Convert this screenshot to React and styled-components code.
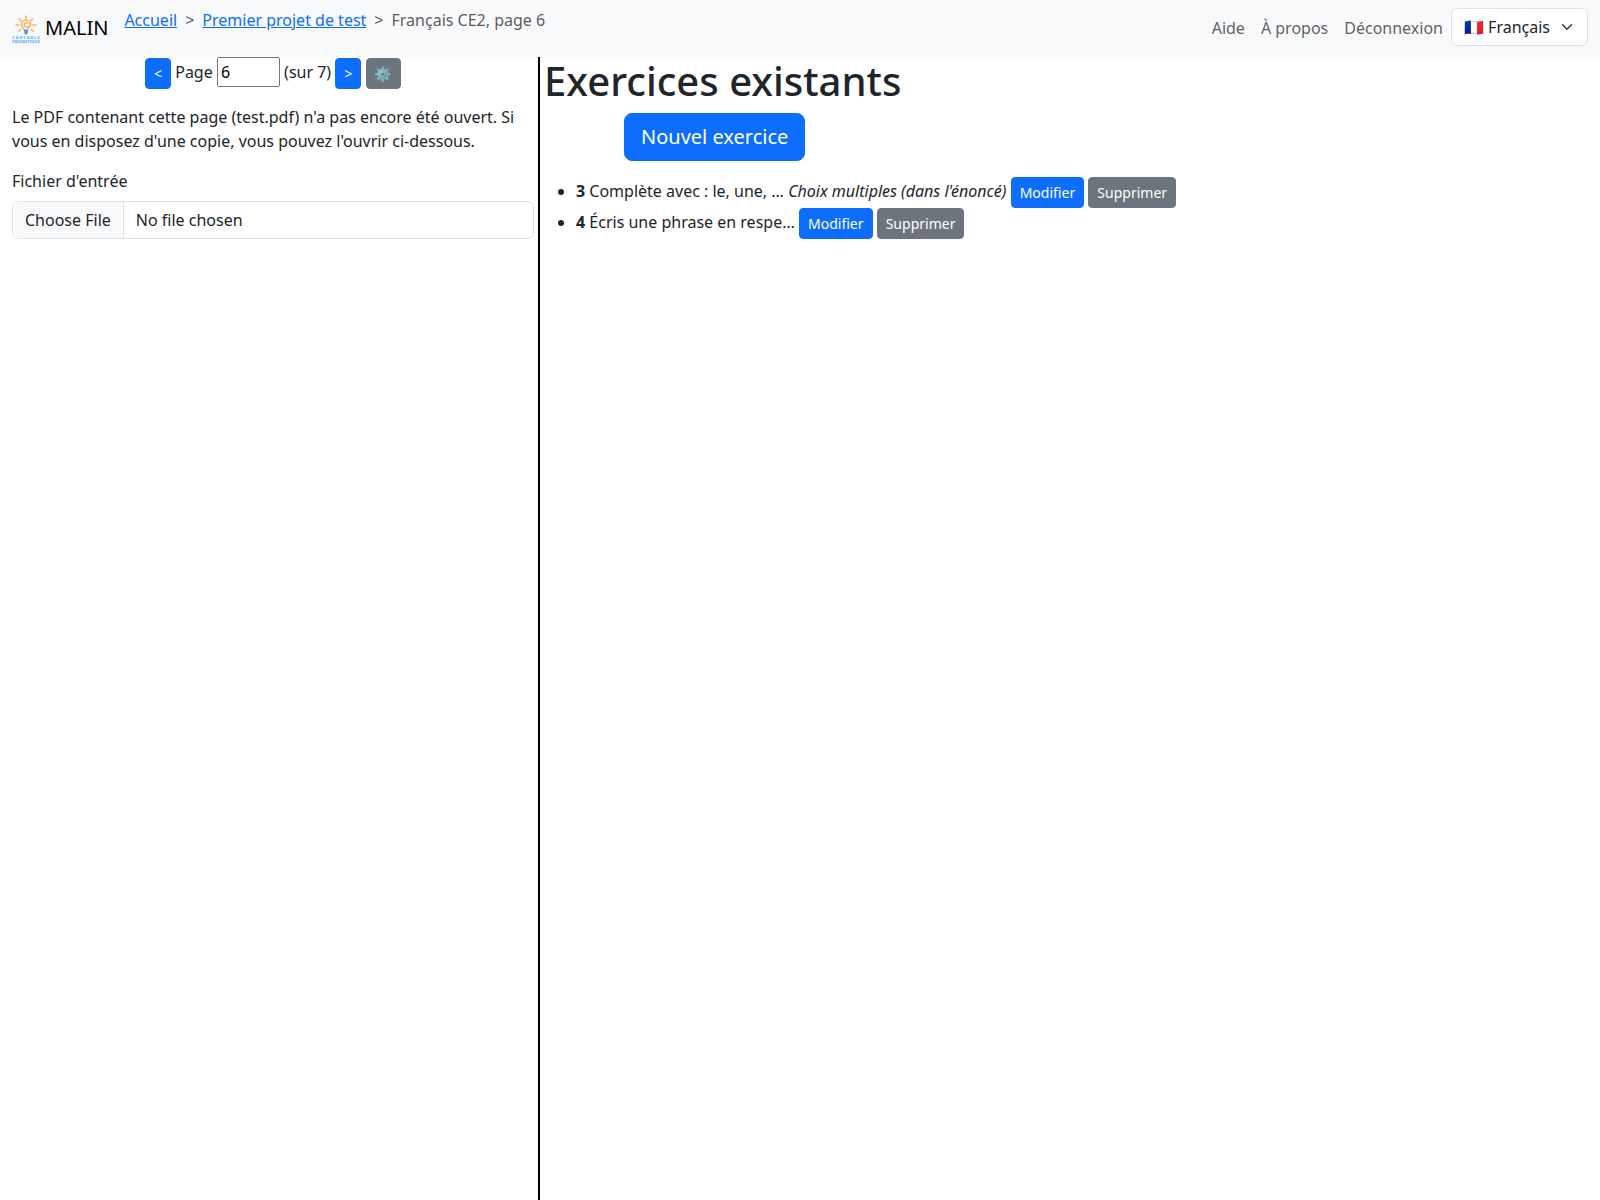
import React, { useState } from "react";
import styled, { createGlobalStyle, css } from "styled-components";

const GlobalStyle = createGlobalStyle`
  *, *::before, *::after { box-sizing: border-box; }
  body {
    margin: 0;
    background: #fff;
    color: #212529;
    font-family: "Noto Sans", "Liberation Sans", "Noto Color Emoji", sans-serif;
    font-size: 16px;
    line-height: 24px;
  }
  button, input, select { margin: 0; font-family: inherit; }
`;

const Page = styled.div`
  display: flex;
  flex-direction: column;
  min-height: 100vh;
`;

const Navbar = styled.header`
  display: flex;
  align-items: flex-start;
  padding: 8px 12px 9px;
  background: #f8f9fa;
`;

const Brand = styled.a`
  display: flex;
  align-items: center;
  gap: 5px;
  margin-right: 16px;
  padding: 5px 0;
  color: #000;
  font-size: 20px;
  line-height: 30px;
  text-decoration: none;
`;

const LogoDrawing = styled.svg`
  width: 28px;
  height: 30px;
  overflow: visible;
`;

const Breadcrumb = styled.ol`
  display: flex;
  flex: 1;
  margin: 0;
  padding: 0;
  list-style: none;
`;

const Crumb = styled.li`
  color: rgba(33, 37, 41, 0.75);

  & + &::before {
    content: ">";
    padding: 0 8px;
  }
`;

const CrumbLink = styled.a`
  color: #0d6efd;
  text-decoration: underline;
`;

const NavLinks = styled.nav`
  display: flex;
`;

const NavLink = styled.a`
  padding: 8px;
  color: rgba(0, 0, 0, 0.65);
  text-decoration: none;
`;

const LanguageField = styled.div`
  display: grid;
  align-items: center;

  & > * { grid-area: 1 / 1; }
`;

const LanguageSelect = styled.select`
  appearance: none;
  padding: 6px 37px 6px 12px;
  border: 1px solid #dee2e6;
  border-radius: 6px;
  background: #fff;
  color: #212529;
  font-size: 16px;
  line-height: 24px;
`;

const Chevron = styled.svg`
  justify-self: end;
  width: 16px;
  height: 12px;
  margin-right: 13px;
  pointer-events: none;
`;

const Columns = styled.main`
  display: flex;
  flex: 1;
`;

const SourcePanel = styled.section`
  flex: 0 0 33.75%;
  padding: 0 4px 0 12px;
  border-right: 2px solid #000;
`;

const ExercisesPanel = styled.section`
  flex: 1;
  padding-left: 4px;
`;

const Pager = styled.div`
  margin-bottom: 16px;
  text-align: center;
`;

const PageInput = styled.input`
  width: 63px;
  font-size: 16px;
  line-height: 24px;
`;

const Notice = styled.p`
  margin: 0 0 16px;
`;

const FileLabel = styled.label`
  display: block;
  margin-bottom: 8px;
`;

const FileInput = styled.input`
  display: block;
  width: 100%;
  padding: 6px 12px;
  overflow: hidden;
  border: 1px solid #dee2e6;
  border-radius: 6px;
  background: #fff;
  color: #212529;
  font-size: 16px;
  line-height: 24px;

  &::file-selector-button {
    margin: -6px 12px -6px -12px;
    padding: 6px 12px;
    border: 0 solid #dee2e6;
    border-right-width: 1px;
    border-radius: 0;
    background: #f8f9fa;
    color: #212529;
    font: inherit;
  }
`;

const Button = styled.button`
  padding: 4px 8px;
  border: 1px solid ${(p) => (p.$secondary ? "#6c757d" : "#0d6efd")};
  border-radius: 4px;
  background: ${(p) => (p.$secondary ? "#6c757d" : "#0d6efd")};
  color: #fff;
  font-size: 14px;
  line-height: 21px;
  vertical-align: middle;
  cursor: pointer;

  ${(p) =>
    p.$large &&
    css`
      display: block;
      margin-left: 80px;
      padding: 8px 16px;
      border-radius: 8px;
      font-size: 20px;
      line-height: 30px;
    `}
`;

const Title = styled.h1`
  margin: 0 0 8px;
  font-size: 40px;
  font-weight: 500;
  line-height: 48px;
`;

const ExerciseList = styled.ul`
  margin: 16px 0;
  padding-left: 32px;
`;

const exercises = [
  { number: "3", text: "Complète avec : le, une, …", kind: "Choix multiples (dans l'énoncé)" },
  { number: "4", text: "Écris une phrase en respe…" },
];

function Logo() {
  return (
    <LogoDrawing viewBox="0 -1.5 28 30" aria-hidden="true">
      <g fill="none" stroke="#fbb25c" strokeWidth="1.5" strokeLinecap="round">
        <path d="M14 1.500v3M7 4l2 2.200M21 4l-2 2.200M4 10.500h3.500M20.500 10.500H24M6.500 17l2.200-2M21.500 17l-2.200-2" />
        <path d="M12.200 15.500c0-2-2.600-2.600-2.600-5.500a4.400 4.400 0 0 1 8.800 0c0 2.900-2.600 3.500-2.600 5.500" />
        <path d="M16 8.800a2.200 2.200 0 1 0 0 3.200" />
      </g>
      <path d="M12.200 15h3.600v3.500l-1 1.500h-1.600l-1-1.500z" fill="#3f98f5" />
      <g fill="#56a8fa" fontFamily="Noto Sans" fontWeight="700" textAnchor="middle">
        <text x="14" y="24.500" fontSize="4">C A R T A B L E</text>
        <text x="14" y="28.500" fontSize="4">FANTASTIQUE</text>
      </g>
    </LogoDrawing>
  );
}

export default function App() {
  const [page, setPage] = useState(6);

  return (
    <Page>
      <GlobalStyle />
      <Navbar>
        <Brand href="#">
          <Logo />
          MALIN
        </Brand>
        <Breadcrumb>
          <Crumb><CrumbLink href="#">Accueil</CrumbLink></Crumb>
          <Crumb><CrumbLink href="#">Premier projet de test</CrumbLink></Crumb>
          <Crumb>Français CE2, page 6</Crumb>
        </Breadcrumb>
        <NavLinks>
          <NavLink href="#">Aide</NavLink>
          <NavLink href="#">À propos</NavLink>
          <NavLink href="#">Déconnexion</NavLink>
        </NavLinks>
        <LanguageField>
          <LanguageSelect aria-label="Langue">
            <option>🇫🇷 Français</option>
          </LanguageSelect>
          <Chevron viewBox="0 0 16 16" aria-hidden="true">
            <path d="m2 5 6 6 6-6" fill="none" stroke="#343a40" strokeWidth="2" strokeLinecap="round" strokeLinejoin="round" />
          </Chevron>
        </LanguageField>
      </Navbar>
      <Columns>
        <SourcePanel>
          <Pager>
            <Button>&lt;</Button>{" "}
            <label>
              Page{" "}
              <PageInput
                type="number"
                min="1"
                max="7"
                value={page}
                onChange={(e) => setPage(e.target.value)}
              />
            </label>{" "}
            (sur 7) <Button>&gt;</Button>{" "}
            <Button $secondary aria-label="Paramètres">⚙️</Button>
          </Pager>
          <Notice>
            Le PDF contenant cette page (test.pdf) n'a pas encore été ouvert. Si vous en disposez
            d'une copie, vous pouvez l'ouvrir ci-dessous.
          </Notice>
          <FileLabel htmlFor="source-file">Fichier d'entrée</FileLabel>
          <FileInput id="source-file" type="file" />
        </SourcePanel>
        <ExercisesPanel>
          <Title>Exercices existants</Title>
          <Button $large>Nouvel exercice</Button>
          <ExerciseList>
            {exercises.map(({ number, text, kind }) => (
              <li key={number}>
                <strong>{number}</strong> {text} {kind && <em>{kind}</em>}
                {kind && " "}
                <Button>Modifier</Button> <Button $secondary>Supprimer</Button>
              </li>
            ))}
          </ExerciseList>
        </ExercisesPanel>
      </Columns>
    </Page>
  );
}
